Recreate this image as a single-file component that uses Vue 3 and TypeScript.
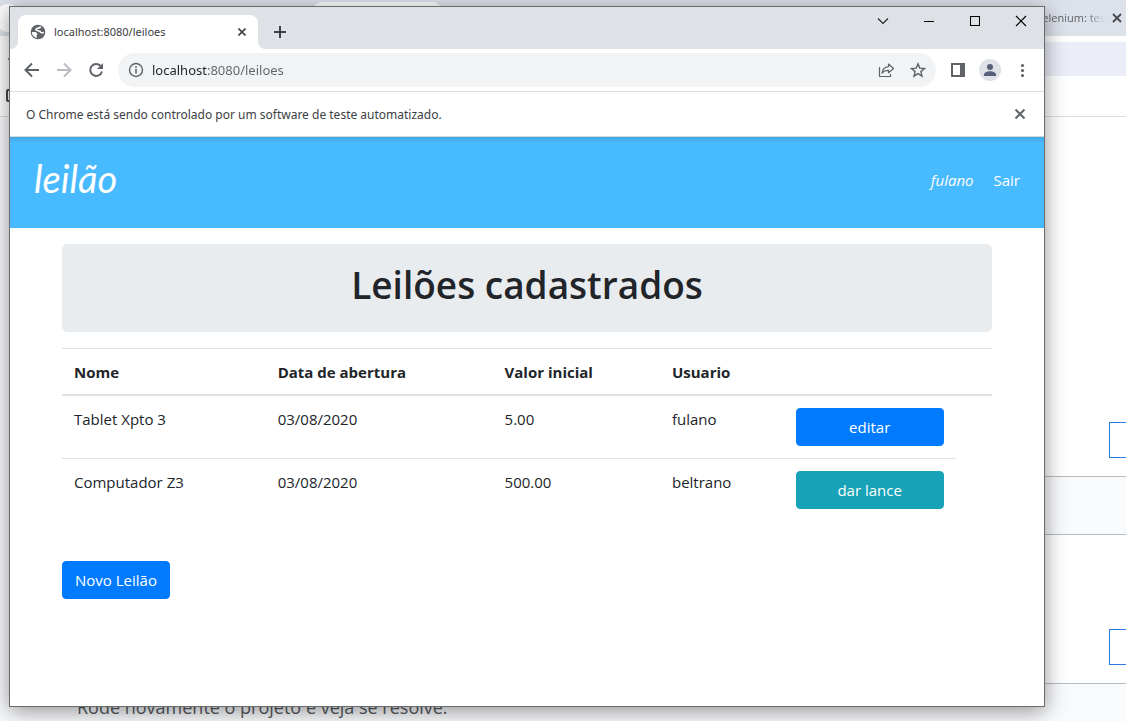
<script setup lang="ts">
import { ref } from 'vue'

interface Leilao {
  nome: string
  data: string
  valor: string
  usuario: string
  acao: string
  tipo: 'primary' | 'info'
}

const leiloes: Leilao[] = [
  { nome: 'Tablet Xpto 3', data: '03/08/2020', valor: '5.00', usuario: 'fulano', acao: 'editar', tipo: 'primary' },
  { nome: 'Computador Z3', data: '03/08/2020', valor: '500.00', usuario: 'beltrano', acao: 'dar lance', tipo: 'info' },
]
const endereco = ref('localhost:8080/leiloes')
</script>

<template>
  <div class="desktop">
    <div class="behind">
      <div class="behind-tabs">
        <span class="behind-pill"></span>
        <span class="behind-tab"></span>
        <span class="behind-title">elenium: tes</span>
        <button class="icon-btn behind-close" aria-label="Fechar guia">
          <svg width="10" height="10" viewBox="0 0 10 10"><path d="M1 1l8 8M9 1L1 9" stroke="#45494d" stroke-width="1.8" /></svg>
        </button>
      </div>
      <div class="behind-bar">
        <div class="behind-omnibox">
          <svg width="10" height="10" viewBox="0 0 10 10"><path d="M8 5h2" stroke="#888" stroke-width="2" /></svg>
        </div>
        <div class="behind-marks">
          <svg width="14" height="14" viewBox="0 0 14 14"><rect x="1" y="1" width="12" height="11" rx="1" fill="none" stroke="#45494d" stroke-width="2" /></svg>
        </div>
      </div>
      <div class="behind-section first"><button class="reply" aria-label="Responder"></button></div>
      <div class="behind-strip"></div>
      <div class="behind-section second"><button class="reply" aria-label="Responder"></button></div>
      <div class="behind-last"><p>Rode novamente o projeto e veja se resolve.</p></div>
    </div>

    <div class="window">
      <div class="tabstrip">
        <div class="tab">
          <svg width="16" height="16" viewBox="0 0 16 16">
            <circle cx="8" cy="8" r="7.300" fill="#5f6368" />
            <path d="M10.800 2.600C9.800 4.600 6 3.600 6 5.600c0 1.600 3.800.7 4.700 2.600.5.900 1.600.6 3 .3" fill="none" stroke="#fff" stroke-width="1.700" />
            <path d="M1.800 8.200c2.200-.3 4.600-.2 5.400 1.200.7 1.300-.9 1.400-.6 2.600.2.600.2 1.300.1 2C4 13.500 1.900 11.200 1.800 8.200z" fill="#fff" />
          </svg>
          <span class="tab-title">localhost:8080/leiloes</span>
          <button class="icon-btn" aria-label="Fechar">
            <svg width="8" height="8" viewBox="0 0 8 8"><path d="M.5.5l7 7M7.500.5l-7 7" stroke="#3c4043" stroke-width="1.600" /></svg>
          </button>
        </div>
        <button class="icon-btn new-tab" aria-label="Nova guia">
          <svg width="12" height="12" viewBox="0 0 12 12"><path d="M6 0v12M0 6h12" stroke="#3c4043" stroke-width="2" /></svg>
        </button>
        <div class="captions">
          <button class="icon-btn" aria-label="Pesquisar guias"><svg width="12" height="12" viewBox="0 0 12 12"><path d="M1 3.500l5 5 5-5" fill="none" stroke="#222" stroke-width="1.100" /></svg></button>
          <button class="icon-btn" aria-label="Minimizar"><svg width="12" height="12" viewBox="0 0 12 12"><path d="M1 6.500h10" stroke="#000" /></svg></button>
          <button class="icon-btn" aria-label="Maximizar"><svg width="12" height="12" viewBox="0 0 12 12"><rect x="1.500" y="1.500" width="9" height="9" fill="none" stroke="#000" /></svg></button>
          <button class="icon-btn" aria-label="Fechar janela"><svg width="12" height="12" viewBox="0 0 12 12"><path d="M1 1l10 10M11 1L1 11" stroke="#000" stroke-width="1.100" /></svg></button>
        </div>
      </div>

      <div class="toolbar">
        <button class="icon-btn nav" aria-label="Voltar"><svg width="16" height="16" viewBox="0 0 16 16"><path d="M15 8H2M8 1.500L1.500 8 8 14.500" fill="none" stroke="#5f6368" stroke-width="2" /></svg></button>
        <button class="icon-btn nav" aria-label="Avançar"><svg width="16" height="16" viewBox="0 0 16 16"><path d="M1 8h13M8 1.500L14.500 8 8 14.500" fill="none" stroke="#b9bbbe" stroke-width="2" /></svg></button>
        <button class="icon-btn nav" aria-label="Recarregar"><svg width="16" height="16" viewBox="0 0 16 16"><path d="M13 4.300A6 6 0 1 0 14 9.500" fill="none" stroke="#5f6368" stroke-width="2" /><path d="M15 1v6H9z" fill="#5f6368" /></svg></button>
        <div class="omnibox">
          <svg width="16" height="16" viewBox="0 0 16 16"><circle cx="8" cy="8" r="6.500" fill="none" stroke="#5f6368" stroke-width="1.400" /><path d="M8 7v4.500M8 4.300v1.700" stroke="#5f6368" stroke-width="1.600" /></svg>
          <input v-model="endereco" class="address" type="text" aria-label="Endereço" />
          <button class="icon-btn" aria-label="Compartilhar"><svg width="16" height="16" viewBox="0 0 16 16"><path d="M1.500 5v9.500h11V12" fill="none" stroke="#5f6368" stroke-width="1.200" /><path d="M10.500 2l5 4.500-5 4.300V8.300C7.500 8.200 5.500 9.200 4 11 4.500 7.500 6.800 5 10.500 4.600z" fill="none" stroke="#5f6368" stroke-width="1.200" stroke-linejoin="round" /></svg></button>
          <button class="icon-btn" aria-label="Favoritar"><svg width="16" height="16" viewBox="0 0 16 16"><path d="M8 1.800l1.800 4.300 4.700.4-3.600 3.100 1.100 4.600L8 11.700l-4 2.500 1.100-4.600L1.500 6.500l4.700-.4z" fill="none" stroke="#5f6368" stroke-width="1.400" /></svg></button>
        </div>
        <div class="tools">
          <button class="icon-btn" aria-label="Painel lateral"><svg width="16" height="16" viewBox="0 0 16 16"><path fill-rule="evenodd" d="M1 1h14v14H1zM3 3v10h7V3z" fill="#5f6368" /></svg></button>
          <button class="icon-btn avatar" aria-label="Perfil"><svg width="22" height="22" viewBox="0 0 22 22"><circle cx="11" cy="11" r="11" fill="#dee1e6" /><circle cx="11" cy="8" r="3" fill="#56607a" /><path d="M5 17v-1.500c0-2 3-3.300 6-3.300s6 1.300 6 3.300V17z" fill="#56607a" /></svg></button>
          <button class="icon-btn" aria-label="Menu"><svg width="16" height="16" viewBox="0 0 16 16"><g fill="#5f6368"><circle cx="8.500" cy="3.500" r="1.600" /><circle cx="8.500" cy="8.500" r="1.600" /><circle cx="8.500" cy="13.500" r="1.600" /></g></svg></button>
        </div>
      </div>

      <div class="infobar">
        <span>O Chrome está sendo controlado por um software de teste automatizado.</span>
        <button class="icon-btn" aria-label="Dispensar"><svg width="10" height="10" viewBox="0 0 10 10"><path d="M.5.5l9 9M9.500.5l-9 9" stroke="#5f6368" stroke-width="2" /></svg></button>
      </div>

      <header class="navbar">
        <a class="brand" href="#">leilão</a>
        <nav>
          <em>fulano</em>
          <a href="#">Sair</a>
        </nav>
      </header>

      <main>
        <div class="jumbotron"><h1>Leilões cadastrados</h1></div>
        <table>
          <colgroup>
            <col class="c-nome" /><col class="c-data" /><col class="c-valor" /><col class="c-usuario" /><col class="c-acao" /><col />
          </colgroup>
          <thead>
            <tr><th>Nome</th><th>Data de abertura</th><th>Valor inicial</th><th>Usuario</th><th></th><th></th></tr>
          </thead>
          <tbody>
            <tr v-for="l in leiloes" :key="l.nome">
              <td>{{ l.nome }}</td>
              <td>{{ l.data }}</td>
              <td>{{ l.valor }}</td>
              <td>{{ l.usuario }}</td>
              <td><a class="btn block" :class="l.tipo" href="#">{{ l.acao }}</a></td>
            </tr>
          </tbody>
        </table>
        <a class="btn primary" href="#">Novo Leilão</a>
      </main>
    </div>
  </div>
</template>

<style>
body {
  margin: 0;
}
</style>

<style scoped>
* {
  box-sizing: border-box;
}
.desktop {
  position: relative;
  height: 100vh;
  min-height: 640px;
  overflow: hidden;
  font-family: "Open Sans", "Noto Sans", sans-serif;
  color: #212529;
}
svg {
  display: block;
  flex: none;
}
.icon-btn {
  display: flex;
  align-items: center;
  justify-content: center;
  flex: none;
  width: 16px;
  height: 16px;
  padding: 0;
  border: 0;
  background: none;
}

/* browser behind */
.behind {
  display: flex;
  flex-direction: column;
  height: 100%;
  background: #fff;
}
.behind-tabs {
  display: flex;
  align-items: center;
  flex: none;
  height: 36px;
  padding-right: 1px;
  background: #dde1ea;
}
.behind-pill {
  width: 24px;
  height: 28px;
  margin-left: -4px;
  border-radius: 12px;
  background: #fff;
}
.behind-tab {
  align-self: flex-end;
  width: 130px;
  height: 34px;
  margin-left: 292px;
  border-radius: 10px 10px 0 0;
  background: #fff;
}
.behind-title {
  margin-left: auto;
  font-size: 11px;
  line-height: 16px;
  white-space: nowrap;
  color: #5f6368;
  mask-image: linear-gradient(90deg, #000 70%, transparent);
}
.behind-close {
  margin-left: 4px;
}
.behind-bar {
  flex: none;
  height: 81px;
  padding-top: 6px;
  border-bottom: 1px solid #dadce0;
}
.behind-omnibox {
  display: flex;
  align-items: center;
  height: 34px;
  background: linear-gradient(90deg, #fff 50%, #ebeef8 50%);
}
.behind-marks {
  padding: 13px 6px 0;
}
.behind-section {
  display: flex;
  flex: none;
  align-items: flex-end;
  justify-content: flex-end;
  padding-bottom: 18px;
  border-bottom: 1px solid #b5bcc2;
  background: linear-gradient(90deg, #f9fafc 50%, #fff 50%);
}
.behind-section,
.behind-strip {
  border-image: linear-gradient(90deg, #f9fafc 50%, #b5bcc2 50%) 1;
  border-width: 0 0 1px;
}
.first {
  height: 360px;
}
.second {
  height: 149px;
}
.reply {
  width: 40px;
  height: 36px;
  margin-right: -23px;
  border: 1px solid #2a7ae2;
  background: #fff;
}
.behind-strip {
  flex: none;
  height: 58px;
  border-bottom: 1px solid #b5bcc2;
  background: #f9fafc;
}
.behind-last {
  flex: 1;
  padding: 11px 77px 0;
  background: #f9fafc;
}
.behind-last p {
  margin: 0;
  font-size: 18px;
  line-height: 24px;
  color: #555a60;
}

/* front window */
.window {
  position: absolute;
  inset: 6px 81px 14px 9px;
  display: flex;
  flex-direction: column;
  overflow: hidden;
  border: 1px solid #696b6d;
  background: #fff;
  box-shadow: 0 4px 20px rgba(0, 0, 0, 0.42);
}
.tabstrip {
  display: flex;
  flex: none;
  height: 42px;
  padding-left: 8px;
  background: #dee1e6;
}
.tab {
  position: relative;
  display: flex;
  align-items: center;
  width: 240px;
  height: 34px;
  margin-top: 8px;
  padding: 0 8px 0 12px;
  border-radius: 8px 8px 0 0;
  background: #fff;
}
.tab::before,
.tab::after {
  content: "";
  position: absolute;
  bottom: 0;
  width: 8px;
  height: 8px;
}
.tab::before {
  right: 100%;
  background: radial-gradient(circle at 0 0, transparent 8px, #fff 8px);
}
.tab::after {
  left: 100%;
  background: radial-gradient(circle at 100% 0, transparent 8px, #fff 8px);
}
.tab-title {
  flex: 1;
  padding-left: 8px;
  font-family: "Noto Sans", sans-serif;
  font-size: 11px;
  line-height: 16px;
  color: #3c4043;
}
.new-tab {
  width: 28px;
  height: 28px;
  margin: 11px 0 0 8px;
}
.captions {
  display: flex;
  margin-left: auto;
}
.captions .icon-btn {
  width: 46px;
  height: 28px;
}
.toolbar {
  display: flex;
  align-items: center;
  flex: none;
  height: 43px;
  padding-left: 14px;
  border-bottom: 1px solid #dadce0;
}
.nav {
  margin-right: 16px;
}
.omnibox {
  display: flex;
  align-items: center;
  flex: 1;
  gap: 16px;
  height: 34px;
  margin-left: -2px;
  padding: 0 10px;
  border-radius: 17px;
  background: #f1f3f4;
}
.address {
  flex: 1;
  min-width: 0;
  height: 20px;
  margin-left: -8px;
  padding: 0;
  border: 0;
  outline: 0;
  font-family: "Noto Sans", sans-serif;
  font-size: 13px;
  line-height: 20px;
  color: transparent;
  background: linear-gradient(90deg, #202124 56px, #5f6368 56px);
  background-clip: text;
}
.tools {
  display: flex;
  align-items: center;
  gap: 13px;
  padding: 0 14px;
}
.avatar {
  width: 22px;
  height: 22px;
}
.infobar {
  display: flex;
  align-items: center;
  justify-content: space-between;
  flex: none;
  height: 45px;
  padding: 0 16px;
  border-bottom: 1px solid #d5d7d2;
  font-family: "Noto Sans", sans-serif;
  font-size: 12px;
  color: #3c4043;
}
.navbar {
  display: flex;
  align-items: center;
  justify-content: space-between;
  flex: none;
  height: 91px;
  padding: 0 24px 6px;
  background: linear-gradient(#44a7e3, #48baff 6px);
}
.navbar a {
  color: #fff;
  text-decoration: none;
}
.navbar .brand {
  padding-bottom: 4px;
  font-family: Lato, sans-serif;
  font-size: 38px;
  font-style: italic;
  line-height: 48px;
}
nav {
  display: flex;
  gap: 20px;
  font-size: 15px;
  line-height: 24px;
  color: #fff;
}
main {
  padding: 16px 52px;
  font-size: 15px;
  line-height: 24px;
}
.jumbotron {
  height: 88px;
  padding: 16px;
  border-radius: 5px;
  background: #e9ecef;
  text-align: center;
}
h1 {
  margin: 0;
  font-size: 37px;
  font-weight: 600;
  line-height: 50px;
}
table {
  width: 100%;
  margin: 16px 0 40px;
  border-collapse: collapse;
  table-layout: fixed;
}
.c-nome { width: 21.9%; }
.c-data { width: 24.4%; }
.c-valor { width: 18%; }
.c-usuario { width: 13.3%; }
.c-acao { width: 18.5%; }
th,
td {
  padding: 12px;
  border-top: 1px solid #dee2e6;
  line-height: 22px;
  text-align: left;
  vertical-align: top;
}
thead th {
  padding-bottom: 11px;
  border-bottom: 2px solid #dee2e6;
  vertical-align: bottom;
}
.btn {
  display: inline-block;
  padding: 6px 12px;
  border: 1px solid;
  border-radius: 4px;
  color: #fff;
  line-height: 24px;
  text-align: center;
  text-decoration: none;
}
.block {
  display: block;
}
.primary {
  border-color: #007bff;
  background: #007bff;
}
.info {
  border-color: #17a2b8;
  background: #17a2b8;
}
</style>
